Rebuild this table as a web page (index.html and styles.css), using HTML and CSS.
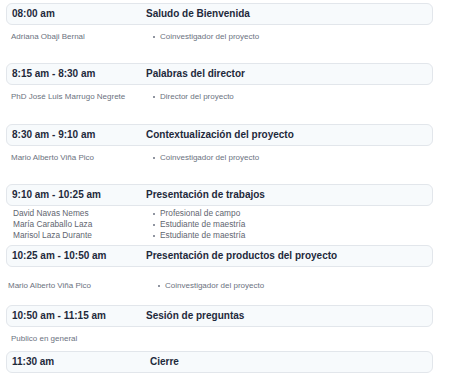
FILE: index.html
```html
<!DOCTYPE html>
<html lang="es">
<head>
<meta charset="utf-8">
<title>Agenda</title>
<link rel="stylesheet" href="styles.css">
</head>
<body>
<div class="agenda">
  <section class="block">
    <div class="head"><span class="time">08:00 am</span><span class="title">Saludo de Bienvenida</span></div>
    <div class="body">
      <div class="names"><span>Adriana Obaji Bernal</span></div>
      <div class="roles"><span class="role">Coinvestigador del proyecto</span></div>
    </div>
  </section>
  <section class="block">
    <div class="head"><span class="time">8:15 am - 8:30 am</span><span class="title">Palabras del director</span></div>
    <div class="body body--plus">
      <div class="names"><span>PhD José Luis Marrugo Negrete</span></div>
      <div class="roles"><span class="role">Director del proyecto</span></div>
    </div>
  </section>
  <section class="block">
    <div class="head"><span class="time">8:30 am - 9:10 am</span><span class="title">Contextualización del proyecto</span></div>
    <div class="body">
      <div class="names"><span>Mario Alberto Viña Pico</span></div>
      <div class="roles"><span class="role">Coinvestigador del proyecto</span></div>
    </div>
  </section>
  <section class="block">
    <div class="head"><span class="time">9:10 am - 10:25 am</span><span class="title">Presentación de trabajos</span></div>
    <div class="body body--plus body--list">
      <div class="names"><span>David Navas Nemes</span><span>María Caraballo Laza</span><span>Marisol Laza Durante</span></div>
      <div class="roles"><span class="role">Profesional de campo</span><span class="role">Estudiante de maestría</span><span class="role">Estudiante de maestría</span></div>
    </div>
  </section>
  <section class="block">
    <div class="head"><span class="time">10:25 am - 10:50 am</span><span class="title">Presentación de productos del proyecto</span></div>
    <div class="body body--low">
      <div class="names"><span>Mario Alberto Viña Pico</span></div>
      <div class="roles"><span class="role">Coinvestigador del proyecto</span></div>
    </div>
  </section>
  <section class="block">
    <div class="head"><span class="time">10:50 am - 11:15 am</span><span class="title">Sesión de preguntas</span></div>
    <div class="body body--short">
      <div class="names"><span>Publico en general</span></div>
    </div>
  </section>
  <section class="block">
    <div class="head"><span class="time">11:30 am</span><span class="title title--inset">Cierre</span></div>
  </section>
</div>
</body>
</html>
```
FILE: styles.css
```css
* { box-sizing: border-box; }
html, body { margin: 0; padding: 0; background: #ffffff; }
body { font-family: "Liberation Sans", Arial, sans-serif; }

.agenda {
  width: 427px;
  margin: 0 0 0 6px;
  padding-top: 3px;
  display: flex;
  flex-direction: column;
}

.head {
  height: 22px;
  border: 1px solid #e2e6eb;
  border-radius: 6px;
  background: #f7fafc;
  display: grid;
  grid-template-columns: 134px 1fr;
  align-items: center;
  padding-left: 5px;
  font-size: 10px;
  font-weight: bold;
  color: #1e293b;
  line-height: 12px;
}
.title--inset { padding-left: 4px; }

.body {
  height: 38px;
  padding: 7px 0 0 5px;
  display: grid;
  grid-template-columns: 141px 1fr;
  font-size: 8px;
  line-height: 10px;
  color: #6b7280;
}
.body--plus { height: 39px; }
.body--short { height: 24px; }
.body--list { padding: 2px 0 0 7px; line-height: 11px; grid-template-columns: 139px 1fr; color: #5f6670; font-size: 8.3px; }
.body--low { padding: 14px 0 0 2px; grid-template-columns: 149px 1fr; }

.names, .roles { display: flex; flex-direction: column; }

.role { position: relative; padding-left: 8px; }
.role::before {
  content: "";
  position: absolute;
  left: 1px;
  top: 4px;
  width: 2px;
  height: 2px;
  border-radius: 50%;
  background: #6b7280;
}
.body--list .role::before { top: 4.5px; }
```
